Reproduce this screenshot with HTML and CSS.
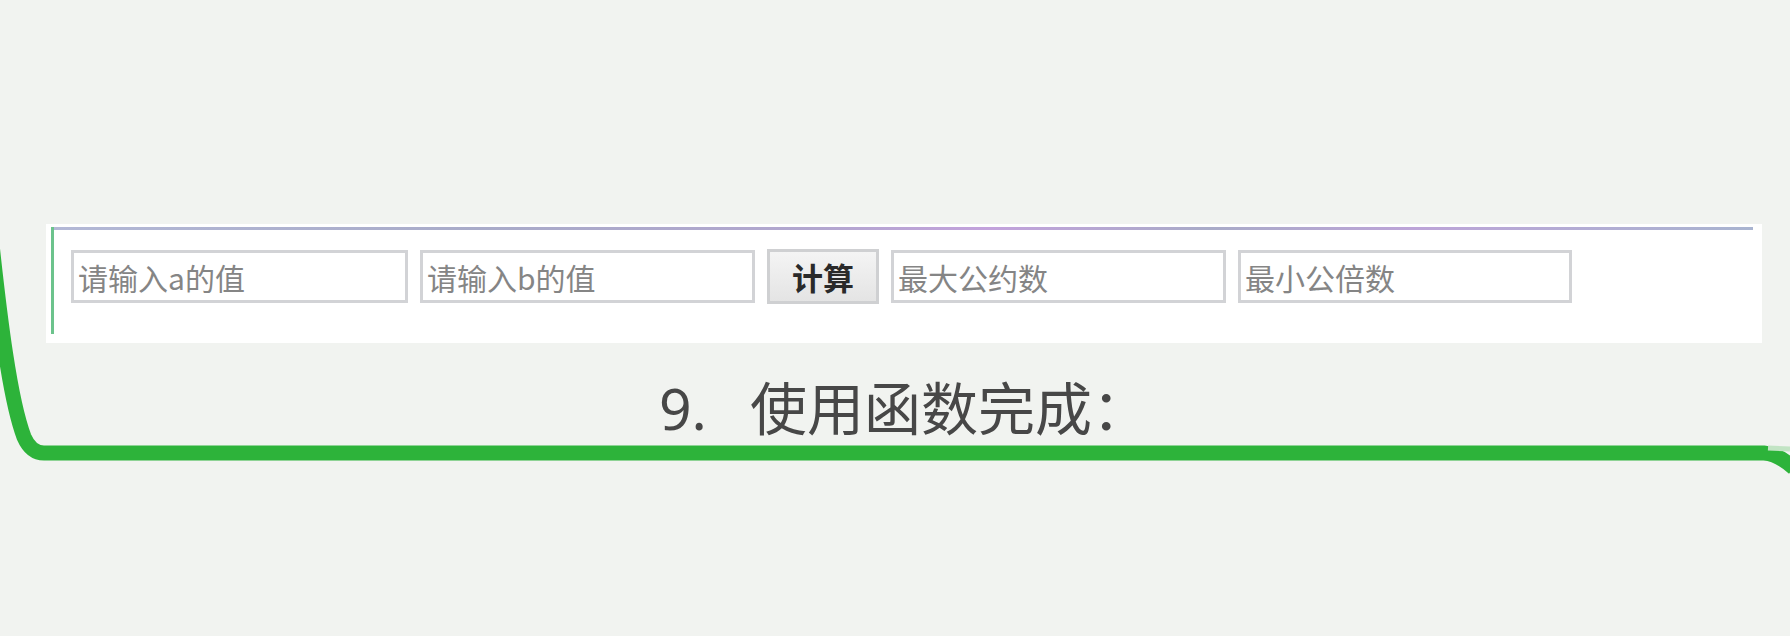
FILE: index.html
```html
<!DOCTYPE html>
<html lang="zh-CN">
<head>
<meta charset="utf-8">
<title>函数完成</title>
<link rel="stylesheet" href="styles.css">
</head>
<body>
<main class="page">
  <section class="panel">
    <div class="frame">
      <div class="row">
        <input class="field f1" type="text" placeholder="请输入a的值">
        <input class="field f2" type="text" placeholder="请输入b的值">
        <button class="calc" type="button">计算</button>
        <input class="field f3" type="text" placeholder="最大公约数">
        <input class="field f4" type="text" placeholder="最小公倍数">
      </div>
    </div>
  </section>
  <h2 class="title"><span class="num">9.</span>使用函数完成：</h2>
</main>
<svg class="curve" width="1790" height="636" viewBox="0 0 1790 636" aria-hidden="true">
  <path d="M -9 235 C 0 320, 10 400, 24 437 Q 31 453 44 453 L 1764 453 Q 1778 454 1794 468" fill="none" stroke="#2db33a" stroke-width="15" stroke-linejoin="round"/>
  <path d="M 1768 448 L 1790 449" stroke="#c2e4c4" stroke-width="5"/>
</svg>
</body>
</html>
```
FILE: styles.css
```css
html, body {
  margin: 0;
  padding: 0;
  background: #f1f3f0;
}

body {
  width: 1790px;
  height: 636px;
  overflow: hidden;
  position: relative;
  font-family: "Noto Sans CJK SC", "Noto Sans", sans-serif;
}

.page {
  padding-top: 224px;
}

.panel {
  margin-left: 46px;
  width: 1716px;
  height: 119px;
  box-sizing: border-box;
  background: #ffffff;
  padding: 3px 9px 9px 5px;
}

.frame {
  height: 107px;
  box-sizing: border-box;
  border-left: 3px solid #6cc38c;
  background: linear-gradient(90deg, #b3b8d6 0%, #a9abc9 25%, #b2a6cf 45%, #c3a2dc 55%, #a9abc8 68%, #bda4d8 80%, #a9b4d0 100%) top left / 100% 3px no-repeat;
  padding: 22px 0 0 17px;
}

.row {
  display: flex;
  align-items: center;
  gap: 12px;
  height: 55px;
}

.field {
  height: 53px;
  box-sizing: border-box;
  border: 3px solid #d2d3d6;
  background: #fff;
  padding: 0 0 0 4px;
  margin: 0;
  font-family: "Noto Sans CJK SC", sans-serif;
  font-size: 30px;
  color: #555;
  outline: none;
}

.field::placeholder {
  color: #858585;
}

.f1 { width: 337px; }
.f2 { width: 335px; }
.f3 { width: 335px; }
.f4 { width: 334px; }

.calc {
  width: 112px;
  height: 55px;
  box-sizing: border-box;
  border: 3px solid #cfd0d2;
  background: linear-gradient(#f4f4f4, #e4e4e4);
  margin: 0;
  padding: 0;
  font-family: "Noto Sans CJK SC", sans-serif;
  font-size: 31px;
  font-weight: 700;
  color: #2a2a2a;
}

.title {
  margin: 34px 0 0 0;
  padding-left: 659px;
  font-size: 57px;
  line-height: 57px;
  font-weight: 400;
  color: #474747;
  font-family: "Noto Sans CJK SC", "Noto Sans", sans-serif;
}

.num {
  display: inline-block;
  width: 91px;
  font-family: "Noto Sans", "Noto Sans CJK SC", sans-serif;
}

.curve {
  position: absolute;
  left: 0;
  top: 0;
  pointer-events: none;
}
```
